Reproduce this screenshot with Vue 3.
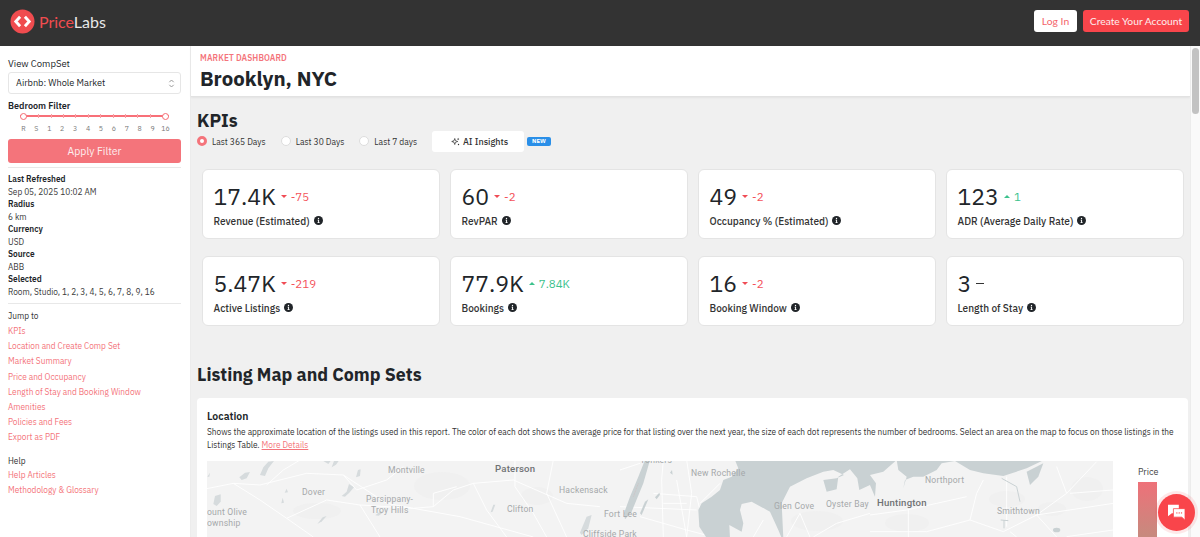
<script setup>
const bedrooms = ['R', 'S', '1', '2', '3', '4', '5', '6', '7', '8', '9', '16']

const meta = [
  { label: 'Last Refreshed', value: 'Sep 05, 2025 10:02 AM' },
  { label: 'Radius', value: '6 km' },
  { label: 'Currency', value: 'USD' },
  { label: 'Source', value: 'ABB' },
  { label: 'Selected', value: 'Room, Studio, 1, 2, 3, 4, 5, 6, 7, 8, 9, 16' },
]

const jumpLinks = [
  'KPIs',
  'Location and Create Comp Set',
  'Market Summary',
  'Price and Occupancy',
  'Length of Stay and Booking Window',
  'Amenities',
  'Policies and Fees',
  'Export as PDF',
]

const helpLinks = ['Help Articles', 'Methodology & Glossary']

const ranges = [
  { label: 'Last 365 Days', active: true },
  { label: 'Last 30 Days', active: false },
  { label: 'Last 7 days', active: false },
]

const kpis = [
  { value: '17.4K', delta: '-75', dir: 'down', label: 'Revenue (Estimated)' },
  { value: '60', delta: '-2', dir: 'down', label: 'RevPAR' },
  { value: '49', delta: '-2', dir: 'down', label: 'Occupancy % (Estimated)' },
  { value: '123', delta: '1', dir: 'up', label: 'ADR (Average Daily Rate)' },
  { value: '5.47K', delta: '-219', dir: 'down', label: 'Active Listings' },
  { value: '77.9K', delta: '7.84K', dir: 'up', label: 'Bookings' },
  { value: '16', delta: '-2', dir: 'down', label: 'Booking Window' },
  { value: '3', delta: '', dir: 'flat', label: 'Length of Stay' },
]

// x = left edge, y = vertical centre, both in map pixels
const places = [
  { name: 'Paterson', x: 288, y: 8, big: true },
  { name: 'Montville', x: 181, y: 9 },
  { name: 'Dover', x: 95, y: 31 },
  { name: 'Parsippany-', x: 159, y: 38 },
  { name: 'Troy Hills', x: 164, y: 49 },
  { name: 'Clifton', x: 300, y: 48 },
  { name: 'Hackensack', x: 352, y: 29 },
  { name: 'ount Olive', x: 0, y: 51 },
  { name: 'ownship', x: 0, y: 62 },
  { name: 'Yonkers', x: 433, y: -1 },
  { name: 'New Rochelle', x: 484, y: 12 },
  { name: 'Fort Lee', x: 397, y: 53 },
  { name: 'Cliffside Park', x: 376, y: 73 },
  { name: 'Northport', x: 718, y: 19 },
  { name: 'Glen Cove', x: 567, y: 45 },
  { name: 'Oyster Bay', x: 619, y: 43 },
  { name: 'Huntington', x: 670, y: 42, big: true },
  { name: 'Smithtown', x: 790, y: 50 },
]
</script>

<template>
  <div class="page">
    <header class="topbar">
      <div class="logo">
        <svg class="logo-mark" viewBox="0 0 26 26">
          <circle cx="13" cy="13" r="12.5" fill="#f04c4f" />
          <path d="M10.5 8 L6 13 L10.5 18 M15.5 8 L20 13 L15.5 18" fill="none" stroke="#fff" stroke-width="3" />
        </svg>
        <span class="logo-text"><span class="logo-price">Price</span>Labs</span>
      </div>
      <div class="top-actions">
        <button class="btn-login">Log In</button>
        <button class="btn-signup">Create Your Account</button>
      </div>
    </header>

    <div class="body-row">
      <aside class="sidebar">
        <div class="field-label">View CompSet</div>
        <div class="select">
          <span>Airbnb: Whole Market</span>
          <svg class="select-arrows" viewBox="0 0 8 12">
            <path d="M1.5 4.5 L4 2 L6.5 4.5 M1.5 7.5 L4 10 L6.5 7.5" fill="none" stroke="#8a8a8a" stroke-width="1" />
          </svg>
        </div>

        <div class="filter-label">Bedroom Filter</div>
        <div class="slider">
          <div class="slider-track">
            <span class="slider-knob"></span>
            <span v-for="n in 10" :key="n" class="slider-tick"></span>
            <span class="slider-knob"></span>
          </div>
          <div class="slider-labels">
            <span v-for="b in bedrooms" :key="b">{{ b }}</span>
          </div>
        </div>
        <button class="btn-apply">Apply Filter</button>

        <div class="meta">
          <template v-for="m in meta" :key="m.label">
            <div class="meta-label">{{ m.label }}</div>
            <div class="meta-value">{{ m.value }}</div>
          </template>
        </div>

        <div class="nav-block">
          <div class="nav-title">Jump to</div>
          <a v-for="l in jumpLinks" :key="l" class="nav-link">{{ l }}</a>
          <div class="nav-title help-title">Help</div>
          <a v-for="l in helpLinks" :key="l" class="nav-link">{{ l }}</a>
        </div>
      </aside>

      <main class="main">
        <div class="title-bar">
          <div class="eyebrow">MARKET DASHBOARD</div>
          <h1 class="city">Brooklyn, NYC</h1>
        </div>

        <div class="content">
          <h2 class="section-title">KPIs</h2>
          <div class="range-row">
            <label v-for="r in ranges" :key="r.label" class="radio">
              <span class="radio-dot" :class="{ on: r.active }"></span>
              {{ r.label }}
            </label>
            <button class="btn-ai">
              <svg class="sparkle" viewBox="0 0 12 12">
                <path d="M5 2 L6 5 L9 6 L6 7 L5 10 L4 7 L1 6 L4 5 Z" fill="none" stroke="#333" stroke-width="1" />
                <path d="M9.5 1 L10 2.2 L11.2 2.7 L10 3.2 L9.5 4.4 L9 3.2 L7.8 2.7 L9 2.2 Z" fill="#333" />
                <circle cx="10" cy="10" r="0.9" fill="#333" />
              </svg>
              AI Insights
            </button>
            <span class="badge-new">NEW</span>
          </div>

          <div class="kpi-grid">
            <div v-for="k in kpis" :key="k.label" class="kpi-card">
              <div class="kpi-top">
                <span class="kpi-value">{{ k.value }}</span>
                <span v-if="k.dir === 'flat'" class="kpi-dash"></span>
                <template v-else>
                  <span class="kpi-caret" :class="k.dir"></span>
                  <span class="kpi-delta" :class="k.dir">{{ k.delta }}</span>
                </template>
              </div>
              <div class="kpi-label">
                {{ k.label }}
                <svg class="info" viewBox="0 0 16 16">
                  <circle cx="8" cy="8" r="8" fill="#212529" />
                  <circle cx="8" cy="4.4" r="1.2" fill="#fff" />
                  <path d="M6.4 6.8 H9 V11.2 H10 V12.4 H6.2 V11.2 H7.3 V8 H6.4 Z" fill="#fff" />
                </svg>
              </div>
            </div>
          </div>

          <h2 class="section-title map-title">Listing Map and Comp Sets</h2>
          <section class="panel">
            <h3 class="panel-title">Location</h3>
            <p class="panel-text">
              Shows the approximate location of the listings used in this report. The color of each dot shows the average price for that listing over the next year, the size of each dot represents the number of bedrooms. Select an area on the map to focus on those listings in the Listings Table.
              <a class="more-link">More Details</a>
            </p>
            <div class="map-row">
              <div class="map">
                <svg class="map-art" viewBox="0 0 906 76">
                  <g fill="#f0f0f0">
                    <ellipse cx="235" cy="25" rx="28" ry="14" />
                    <ellipse cx="330" cy="35" rx="16" ry="9" />
                    <ellipse cx="110" cy="50" rx="24" ry="8" />
                    <ellipse cx="610" cy="60" rx="26" ry="10" />
                    <ellipse cx="700" cy="62" rx="22" ry="9" />
                    <ellipse cx="800" cy="38" rx="18" ry="8" />
                    <ellipse cx="880" cy="28" rx="16" ry="12" />
                    <ellipse cx="845" cy="48" rx="14" ry="7" />
                  </g>

                  <!-- western part, lakes and roads -->
                  <g transform="translate(-7,-1) scale(0.3333)">
                    <g fill="#d6dbdd">
                      <path d="M118 52 L135 38 L150 36 L140 55 L125 60 Z" />
                      <path d="M180 45 L190 22 L205 5 L222 3 L205 25 L195 48 Z" />
                      <path d="M370 3 L385 12 L392 3 Z M395 22 L402 3 L416 3 L408 14 Z" />
                      <path d="M468 52 L474 30 L482 28 L480 48 Z" />
                      <path d="M425 108 L440 95 L447 72 L462 82 L448 98 L435 110 Z" />
                      <path d="M40 132 L45 108 L62 103 L62 125 L50 138 Z" />
                      <path d="M254 98 L260 86 L264 97 Z M244 130 L248 113 L252 128 Z" />
                      <path d="M352 192 L368 172 L380 168 L366 184 Z" />
                      <path d="M872 157 L880 134 L886 134 L878 155 Z" />
                      <path d="M526 166 L542 153 L548 158 L536 167 Z" />
                      <path d="M22 50 L30 38 L28 50 Z" />
                      <path d="M1140 218 L1160 170 L1175 165 L1165 205 L1145 225 Z" />
                    </g>
                    <g fill="none" stroke="#fff" stroke-width="2.6">
                      <path d="M0 90 L100 70 L180 75 L320 40 L430 45 L470 90 L560 60 L610 20" />
                      <path d="M100 70 L180 120 L260 175 L380 120 L480 135 L640 145 L700 140 L760 90 L820 70 L940 60" />
                      <path d="M430 45 L560 130 L640 145" />
                      <path d="M640 145 L780 170 L1000 231" />
                      <path d="M820 70 L860 150 L920 231" />
                      <path d="M945 0 L945 80 L1000 160 L1040 231" />
                      <path d="M940 60 L1100 130 L1200 140" />
                      <path d="M480 135 L540 231" />
                      <path d="M700 140 L700 100 L770 80" />
                      <path d="M1060 0 L1040 100 L1100 231" />
                      <path d="M260 175 L340 231" />
                      <path d="M200 75 L250 30 L300 0" />
                    </g>
                  </g>

                  <!-- hudson, new rochelle and the sound -->
                  <g transform="translate(413,-1) scale(0.3333)">
                    <g fill="none" stroke="#fff" stroke-width="2.6">
                      <path d="M0 30 L60 10" />
                      <path d="M130 0 L125 60 L130 231" />
                      <path d="M100 100 L230 110 L240 150" />
                      <path d="M0 140 L230 150" />
                      <path d="M60 170 L200 210 L280 231" />
                      <path d="M200 0 L215 100 L200 231" />
                      <path d="M300 70 L240 130" />
                      <path d="M170 60 L200 231" />
                      <path d="M130 130 L200 130" />
                      <path d="M400 231 L430 180" />
                      <path d="M540 160 L500 231" />
                      <path d="M540 160 L570 231" />
                      <path d="M580 231 L650 190 L750 160" />
                    </g>
                    <g fill="#c9d1d3">
                      <path d="M75 0 L90 0 L70 70 L35 155 L15 178 L12 160 L30 110 L55 50 Z" />
                      <path d="M345 0 L355 25 L335 50 L310 60 L300 90 L275 110 L245 130 L235 150 L238 200 L260 234 L330 234 L328 195 L365 215 L370 190 L360 150 L365 132 L395 125 L450 155 L475 210 L485 234 L490 234 L485 130 L510 80 L560 55 L610 35 L640 30 L672 45 L650 55 L610 60 L620 95 L650 88 L655 50 L690 28 L712 55 L718 90 L750 75 L765 110 L768 70 L750 45 L790 35 L830 0 Z" />
                      <path d="M150 38 L156 30 L158 44 Z M105 112 L118 98 L120 104 L110 118 Z" />
                      <path d="M75 125 L85 118 L65 165 L60 160 Z" />
                    </g>
                    <path d="M55 70 L40 110" fill="none" stroke="#d9a8a8" stroke-width="1" stroke-dasharray="3 2" />
                  </g>

                  <!-- north shore and smithtown -->
                  <g transform="translate(663,-1) scale(0.3333)">
                    <g fill="none" stroke="#fff" stroke-width="2.6">
                      <path d="M0 165 L110 150 L200 130 L290 110" />
                      <path d="M0 215 L170 215 L300 180 L400 215 L500 165 L730 130" />
                      <path d="M300 180 L320 100 L340 60" />
                      <path d="M410 50 L410 200" />
                      <path d="M115 150 L115 231" />
                      <path d="M500 165 L590 100 L680 5" />
                      <path d="M420 215 L440 231" />
                      <path d="M590 100 L560 20" />
                      <path d="M500 165 L560 231" />
                      <path d="M590 230 L730 210" />
                      <path d="M600 100 L730 90" />
                    </g>
                    <g fill="#c9d1d3">
                      <path d="M80 0 L85 30 L110 50 L100 85 L105 60 L130 50 L160 50 L200 30 L215 10 L255 3 L300 30 L340 40 L400 48 L470 25 L522 0 Z" />
                      <path d="M470 35 L480 75 L505 50 L520 10 Z" />
                      <ellipse cx="560" cy="210" rx="11" ry="7" />
                    </g>
                    <path d="M395 55 L440 80 L450 125" fill="none" stroke="#c9d1d3" stroke-width="3" />
                    <path d="M392 180 L415 182 M402 180 L402 205" fill="none" stroke="#c9d1d3" stroke-width="3" />
                  </g>
                </svg>
                <span
                  v-for="p in places"
                  :key="p.name"
                  class="place"
                  :class="{ big: p.big }"
                  :style="{ left: p.x + 'px', top: p.y - 5 + 'px' }"
                >{{ p.name }}</span>
              </div>
              <div class="legend">
                <div class="legend-title">Price</div>
                <div class="legend-bar"></div>
              </div>
            </div>
          </section>
        </div>
      </main>

      <div class="scrollbar"><div class="scroll-thumb"></div></div>
    </div>

    <button class="chat-btn">
      <svg viewBox="0 0 24 22" class="chat-icon">
        <path d="M1 1 H15 V12 H6 L1 16 Z" fill="#fff" />
        <path d="M8 6 H23 V17 V21 L19 17 H8 Z" fill="#fff" stroke="#f9454b" stroke-width="1" />
        <circle cx="12.5" cy="11.5" r="0.9" fill="#f9454b" />
        <circle cx="15.5" cy="11.5" r="0.9" fill="#f9454b" />
        <circle cx="18.5" cy="11.5" r="0.9" fill="#f9454b" />
      </svg>
    </button>
  </div>
</template>

<style>
html,
body {
  margin: 0;
  overflow: hidden;
}
</style>

<style scoped>
.page {
  position: relative;
  height: 537px;
  overflow: hidden;
  font-family: "IBM Plex Sans", "Noto Sans", sans-serif;
  color: #212529;
  background: #f0f0f0;
}

.topbar {
  display: flex;
  justify-content: space-between;
  align-items: center;
  box-sizing: border-box;
  height: 46px;
  padding: 0 11px 4px 10px;
  background: #333;
}

.logo {
  display: flex;
  align-items: center;
  gap: 4px;
}

.logo-mark {
  width: 25px;
  height: 25px;
}

.logo-text {
  font-family: Lato, sans-serif;
  font-size: 16px;
  color: #e8e8e8;
}

.logo-price {
  color: #f04c4f;
}

.top-actions {
  display: flex;
  gap: 6px;
}

.top-actions button {
  height: 22px;
  border: 0;
  border-radius: 3px;
  padding: 0;
  font-family: Lato, sans-serif;
  font-size: 10.3px;
}

.btn-login {
  width: 43px;
  background: #fff;
  color: #f4646a;
}

.btn-signup {
  width: 106px;
  background: #f9454b;
  color: #fdeeee;
}

.body-row {
  display: flex;
  height: 491px;
}

.sidebar {
  flex: none;
  box-sizing: border-box;
  width: 191px;
  padding: 12px 9px 0 8px;
  background: #fff;
  border-right: 1px solid #ececec;
  font-size: 9px;
}

.field-label {
  font-size: 9.5px;
  line-height: 12px;
}

.select {
  display: flex;
  justify-content: space-between;
  align-items: center;
  box-sizing: border-box;
  height: 22px;
  margin-top: 2px;
  padding: 0 5px 0 7px;
  border: 1px solid #e6e6e6;
  border-radius: 3px;
  font-size: 9.2px;
}

.select-arrows {
  width: 7px;
  height: 11px;
}

.filter-label {
  margin-top: 6px;
  font-size: 9px;
  line-height: 12px;
  font-weight: 600;
}

.slider-track {
  display: flex;
  justify-content: space-between;
  align-items: center;
  height: 8px;
  margin: 0 12px;
  background: linear-gradient(#f87078, #f87078) center / 100% 2px no-repeat;
}

.slider-knob {
  box-sizing: border-box;
  width: 7px;
  height: 7px;
  border: 1.3px solid #f56a72;
  border-radius: 50%;
  background: #fff;
}

.slider-tick {
  width: 1px;
  height: 4px;
  background: #f8a0a5;
}

.slider-labels {
  display: grid;
  grid-template-columns: repeat(12, 1fr);
  margin: 4px 9px 0;
  font-size: 7px;
  line-height: 9px;
  text-align: center;
  color: #777;
}

.btn-apply {
  display: block;
  width: 100%;
  height: 24px;
  margin-top: 6px;
  border: 0;
  border-radius: 3px;
  background: #f4747b;
  color: #fdeeee;
  font-family: inherit;
  font-size: 10.5px;
}

.meta {
  margin-top: 4px;
  padding: 5px 0 5px;
  border-top: 1px solid #e8e8e8;
  border-bottom: 1px solid #e8e8e8;
  line-height: 12.5px;
  font-size: 8.3px;
}

.meta-label {
  font-weight: 600;
}

.meta-value {
  color: #3a3a3a;
}

.nav-block {
  margin-top: 4px;
  font-size: 8.3px;
}

.nav-title {
  line-height: 15px;
  color: #333;
}

.help-title {
  margin-top: 10px;
  line-height: 12px;
}

.nav-link {
  display: block;
  line-height: 15.2px;
  color: #f4747b;
}

.main {
  flex: 1;
  min-width: 0;
}

.title-bar {
  box-sizing: border-box;
  height: 51px;
  padding: 6px 9px 0;
  background: #fff;
  border-bottom: 1px solid #e2e2e2;
  box-shadow: 0 1px 2px rgba(0, 0, 0, 0.06);
}

.eyebrow {
  font-size: 8.3px;
  line-height: 11px;
  font-weight: 600;
  color: #f4747b;
  letter-spacing: 0.1px;
}

.city {
  margin: 3px 0 0;
  font-size: 20.4px;
  line-height: 26px;
  font-weight: 700;
}

.content {
  padding: 0 2px 0 6px;
}

.section-title {
  margin: 14px 0 0;
  font-size: 17.8px;
  line-height: 20px;
  font-weight: 700;
}

.range-row {
  display: flex;
  align-items: center;
  height: 20px;
  font-size: 8.5px;
  color: #333;
}

.radio {
  display: flex;
  align-items: center;
  gap: 5px;
  margin-right: 15px;
}

.radio-dot {
  box-sizing: border-box;
  width: 10px;
  height: 10px;
  border-radius: 50%;
  border: 1px solid #ddd;
  background: #fff;
}

.radio-dot.on {
  border: 3px solid #f4747b;
}

.btn-ai {
  display: flex;
  align-items: center;
  justify-content: center;
  gap: 3px;
  width: 92px;
  height: 21px;
  padding-right: 3px;
  border: 0;
  border-radius: 3px;
  background: #fff;
  color: #333;
  font-family: inherit;
  font-size: 9px;
  font-weight: 500;
}

.sparkle {
  width: 9px;
  height: 9px;
}

.badge-new {
  margin-left: 3px;
  padding: 1px 5px;
  border-radius: 2px;
  background: #2a8fe8;
  color: #fff;
  font-size: 6px;
  line-height: 7px;
  font-weight: 700;
}

.kpi-grid {
  display: grid;
  grid-template-columns: repeat(4, 238px);
  gap: 17px 10px;
  margin: 18px 0 0 5px;
}

.kpi-card {
  box-sizing: border-box;
  height: 70px;
  padding: 14px 10.5px 0;
  background: #fff;
  border: 1px solid #e4e4e4;
  border-radius: 6px;
}

.kpi-top {
  display: flex;
  align-items: center;
  height: 25px;
}

.kpi-value {
  font-size: 23px;
  line-height: 25px;
}

.kpi-caret {
  width: 0;
  height: 0;
  margin: 0 4px 0 5px;
  border-left: 3px solid transparent;
  border-right: 3px solid transparent;
}

.kpi-caret.down {
  border-top: 3px solid #f04c55;
}

.kpi-caret.up {
  border-bottom: 3px solid #3cc28d;
}

.kpi-delta {
  font-size: 11.5px;
}

.kpi-delta.down {
  color: #f4525a;
}

.kpi-delta.up {
  color: #3cc28d;
}

.kpi-dash {
  width: 8px;
  height: 1.5px;
  margin-left: 5px;
  background: #333;
}

.kpi-label {
  display: flex;
  align-items: center;
  gap: 4px;
  margin-top: 6px;
  font-size: 10.1px;
  line-height: 13px;
  font-weight: 500;
  color: #333;
}

.info {
  width: 9px;
  height: 9px;
  margin-top: -3px;
}

.map-title {
  margin-top: 37px;
  line-height: 24px;
}

.panel {
  margin-top: 11px;
  height: 200px;
  padding: 11px 10px;
  background: #fff;
  border-radius: 4px;
}

.panel-title {
  margin: 0;
  font-size: 10.5px;
  line-height: 14px;
  font-weight: 600;
}

.panel-text {
  margin: 2px 0 0;
  font-size: 8.3px;
  line-height: 13px;
  color: #333;
}

.more-link {
  color: #f4747b;
  text-decoration: underline;
}

.map-row {
  display: flex;
  margin-top: 10px;
}

.map {
  position: relative;
  flex: none;
  width: 906px;
  height: 76px;
  overflow: hidden;
  background: #f3f3f3;
}

.map-art {
  display: block;
  width: 906px;
  height: 76px;
}

.place {
  position: absolute;
  font-family: Roboto, sans-serif;
  font-size: 8.6px;
  line-height: 10px;
  letter-spacing: 0.2px;
  color: #a5a8aa;
  white-space: nowrap;
}

.place.big {
  font-size: 9.6px;
  font-weight: 500;
  color: #6f7274;
}

.legend {
  margin-left: 25px;
  width: 30px;
}

.legend-title {
  font-size: 9px;
  line-height: 21px;
  color: #444;
}

.legend-bar {
  width: 19px;
  height: 120px;
  background: linear-gradient(#ee7179, #97a884);
}

.scrollbar {
  flex: none;
  box-sizing: border-box;
  width: 10px;
  background: #fafafa;
  border-left: 1px solid #ececec;
}

.scroll-thumb {
  width: 7px;
  height: 66px;
  margin: 2px 0 0 1px;
  border-radius: 4px;
  background: #c2c2c2;
}

.chat-btn {
  position: absolute;
  right: 5px;
  bottom: 6px;
  display: flex;
  align-items: center;
  justify-content: center;
  width: 37px;
  height: 37px;
  padding: 0;
  border: 0;
  border-radius: 50%;
  background: #f9454b;
  box-shadow: 0 0 0 3px rgba(249, 69, 75, 0.12);
}

.chat-icon {
  width: 19px;
  height: 17px;
}
</style>
